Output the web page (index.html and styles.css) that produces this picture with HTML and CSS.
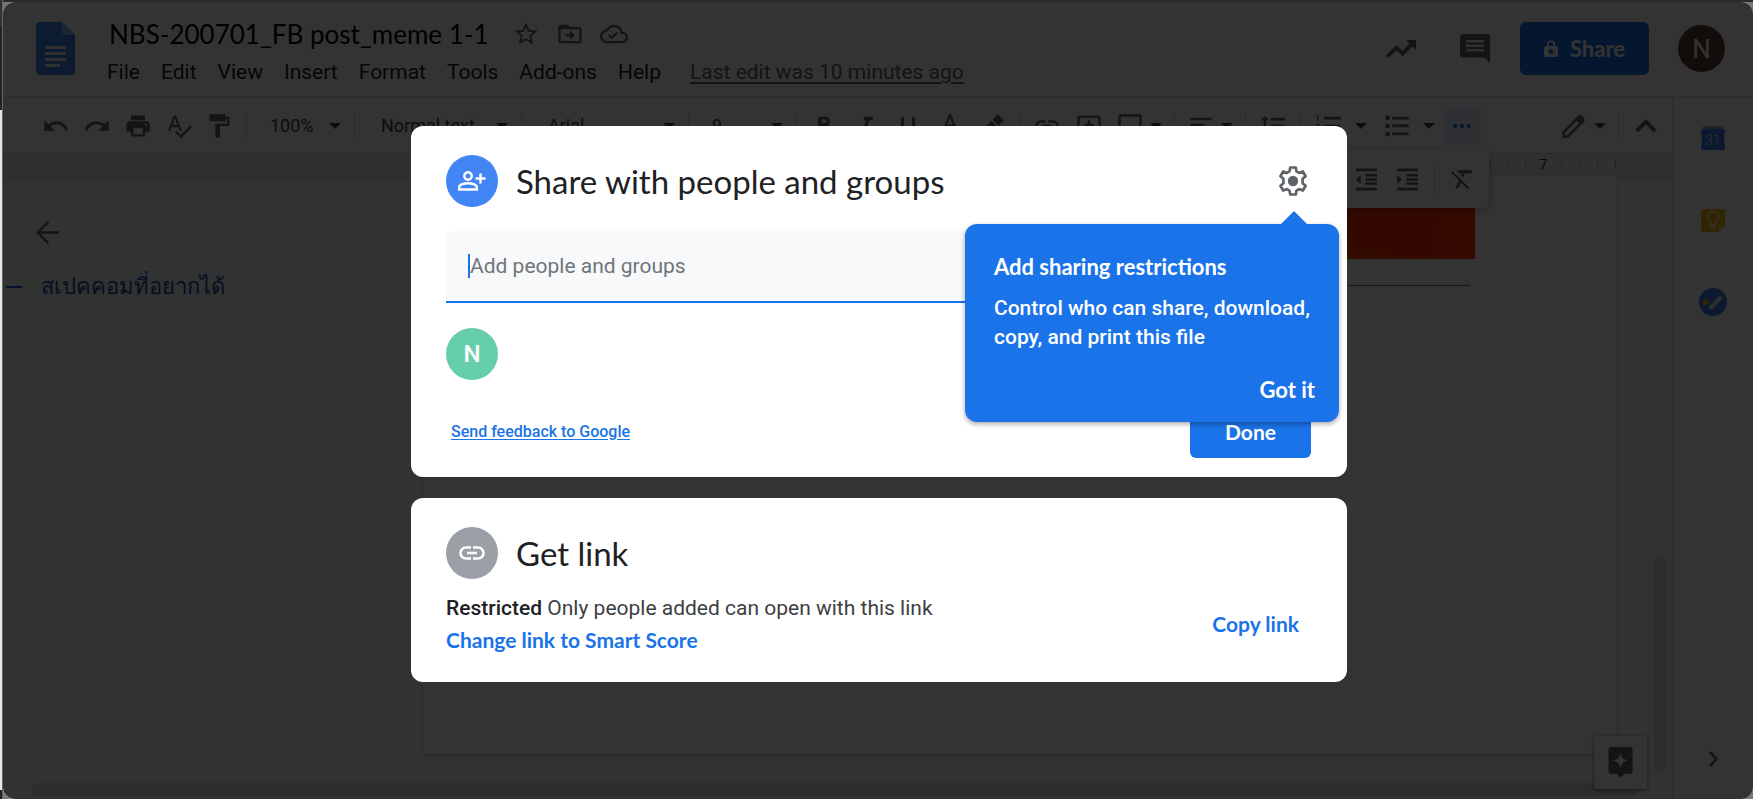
FILE: index.html
```html
<!DOCTYPE html>
<html lang="en">
<head>
<meta charset="utf-8">
<title>NBS-200701_FB post_meme 1-1</title>
<link rel="stylesheet" href="styles.css">
</head>
<body>
<svg class="defs" aria-hidden="true">
  <symbol id="caret" viewBox="0 0 12 6"><path d="M0 0h12L6 6z"/></symbol>
</svg>
<div class="desktop">
  <div class="backdrop"></div>
  <div class="window">
    <div class="app">
      <header class="header">
        <svg class="logo" viewBox="0 0 39 53"><path fill="#4285f4" d="M4 0h22l13 13v36a4 4 0 0 1-4 4H4a4 4 0 0 1-4-4V4a4 4 0 0 1 4-4z"/><path fill="#8ab4f8" d="M26 0l13 13H29a3 3 0 0 1-3-3z"/><path fill="#3367d6" d="M29 13h10v9z" opacity=".5"/><path fill="#f1f1f1" d="M9 24h21v3H9zM9 30h21v3H9zM9 36h21v3H9zM9 42h15v3H9z"/></svg>
        <div class="heading">
          <div class="title-row">
            <h1 class="doc-title">NBS-200701_FB post_meme 1-1</h1>
            <div class="title-icons">
              <button aria-label="Star"><svg viewBox="0 0 24 24"><path d="M22 9.24l-7.19-.62L12 2 9.19 8.63 2 9.24l5.46 4.73L5.82 21 12 17.27 18.18 21l-1.63-7.03L22 9.24zM12 15.4l-3.76 2.27 1-4.28-3.32-2.88 4.38-.38L12 6.1l1.71 4.04 4.38.38-3.32 2.88 1 4.28L12 15.4z"/></svg></button>
              <button aria-label="Move"><svg viewBox="0 0 24 24"><path d="M20 6h-8l-2-2H4c-1.1 0-2 .9-2 2v12c0 1.100.9 2 2 2h16c1.100 0 2-.9 2-2V8c0-1.100-.9-2-2-2zm0 12H4V8h16v10zm-8-1l4-4-4-4v3H8v2h4z"/></svg></button>
              <button aria-label="Document status"><svg viewBox="0 0 24 24"><path d="M19.350 10.040C18.670 6.590 15.640 4 12 4 9.110 4 6.600 5.640 5.350 8.040 2.340 8.360 0 10.910 0 14c0 3.310 2.690 6 6 6h13c2.760 0 5-2.240 5-5 0-2.640-2.050-4.780-4.650-4.960zM19 18H6c-2.210 0-4-1.790-4-4 0-2.050 1.530-3.760 3.560-3.970l1.070-.11.5-.95C8.080 7.140 9.940 6 12 6c2.620 0 4.880 1.860 5.390 4.430l.3 1.500 1.530.11c1.560.1 2.780 1.410 2.780 2.960 0 1.650-1.350 3-3 3zm-9-3.800l-1.900-1.900-1.200 1.200 3.100 3.100 5.300-5.300-1.200-1.200z"/></svg></button>
            </div>
          </div>
          <nav class="menu">
            <button>File</button><button>Edit</button><button>View</button><button>Insert</button><button>Format</button><button>Tools</button><button>Add-ons</button><button>Help</button>
            <a class="last-edit" href="#history">Last edit was 10 minutes ago</a>
          </nav>
        </div>
        <div class="actions">
          <button aria-label="Activity"><svg class="trend" viewBox="0 0 30 18"><path d="M20 0h10v10l-3.600-3.600L16.500 16.200l-6-6L2.500 18 0 15.500 10.500 5l6 6 7-7.400z"/></svg></button>
          <button aria-label="Comments"><svg class="comment" viewBox="0 0 30 29"><path d="M3 0h24a3 3 0 0 1 3 3v26l-6-5.500H3a3 3 0 0 1-3-3V3a3 3 0 0 1 3-3z"/><path fill="#e8eaed" d="M6 6h18v2.500H6zM6 10.500h18V13H6zM6 15h18v2.500H6z"/></svg></button>
          <button class="share"><svg viewBox="0 0 14 17"><path d="M2 6h1V4.500a4 4 0 0 1 8 0V6h1a2 2 0 0 1 2 2v7a2 2 0 0 1-2 2H2a2 2 0 0 1-2-2V8a2 2 0 0 1 2-2zm2.500 0h5V4.500a2.500 2.500 0 0 0-5 0zM7 9a2.500 2.500 0 1 0 0 5 2.500 2.500 0 0 0 0-5z"/></svg>Share</button>
          <button class="account" aria-label="Account">N</button>
        </div>
      </header>

      <div class="body">
        <main class="editor">
          <div class="toolbar">
            <button class="tool" aria-label="Undo"><svg viewBox="0 0 24 24"><path d="M12.500 8c-2.650 0-5.050.99-6.900 2.600L2 7v9h9l-3.620-3.620c1.390-1.160 3.160-1.880 5.120-1.880 3.540 0 6.550 2.310 7.600 5.500l2.370-.78C21.080 11.030 17.150 8 12.500 8z"/></svg></button>
            <button class="tool" aria-label="Redo"><svg viewBox="0 0 24 24"><path d="M18.400 10.600C16.550 8.990 14.150 8 11.500 8c-4.650 0-8.580 3.030-9.960 7.220L3.900 16c1.050-3.190 4.050-5.500 7.600-5.500 1.950 0 3.730.72 5.120 1.880L13 16h9V7l-3.600 3.600z"/></svg></button>
            <button class="tool" aria-label="Print"><svg viewBox="0 0 24 24"><path d="M19 8H5c-1.660 0-3 1.340-3 3v6h4v4h12v-4h4v-6c0-1.660-1.340-3-3-3zm-3 11H8v-5h8v5zm3-7c-.55 0-1-.45-1-1s.45-1 1-1 1 .45 1 1-.45 1-1 1zm-1-9H6v4h12V3z"/></svg></button>
            <button class="tool" aria-label="Spelling"><svg viewBox="0 0 24 24"><path d="M12.450 16h2.090L9.430 3H7.570L2.460 16h2.090l1.120-3h5.640l1.140 3zm-6.020-5L8.500 5.480 10.570 11H6.430zm15.160.59l-8.090 8.090L9.830 16l-1.410 1.410 5.090 5.090L23 13l-1.410-1.410z"/></svg></button>
            <button class="tool" aria-label="Paint format"><svg viewBox="0 0 24 24"><path d="M18 4V3c0-.55-.45-1-1-1H5c-.55 0-1 .45-1 1v4c0 .55.45 1 1 1h12c.55 0 1-.45 1-1V6h1v4H9v11c0 .55.45 1 1 1h2c.55 0 1-.45 1-1v-9h8V4h-3z" transform="translate(-1 0)"/></svg></button>
            <span class="sep"></span>
            <label class="picker short"><select aria-label="Zoom"><option>100%</option></select><svg class="caret"><use href="#caret"/></svg></label>
            <span class="sep"></span>
            <label class="picker long"><select aria-label="Styles"><option>Normal text</option></select><svg class="caret"><use href="#caret"/></svg></label>
            <span class="sep"></span>
            <label class="picker long"><select aria-label="Font"><option>Arial</option></select><svg class="caret"><use href="#caret"/></svg></label>
            <span class="sep"></span>
            <label class="picker short"><select aria-label="Font size"><option>9</option></select><svg class="caret"><use href="#caret"/></svg></label>
            <span class="sep"></span>
            <button class="tool" aria-label="Bold"><svg viewBox="0 0 24 24"><path d="M15.600 10.790c.97-.67 1.650-1.770 1.650-2.790 0-2.260-1.750-4-4-4H7v14h7.040c2.090 0 3.710-1.700 3.710-3.790 0-1.520-.86-2.820-2.150-3.420zM10 6.500h3c.83 0 1.500.67 1.500 1.500s-.67 1.500-1.500 1.500h-3v-3zm3.500 9H10v-3h3.500c.83 0 1.500.67 1.500 1.500s-.67 1.500-1.500 1.500z"/></svg></button>
            <button class="tool" aria-label="Italic"><svg viewBox="0 0 24 24"><path d="M10 4v3h2.210l-3.420 8H6v3h8v-3h-2.210l3.420-8H18V4z"/></svg></button>
            <button class="tool" aria-label="Underline"><svg viewBox="0 0 24 24"><path d="M12 17c3.310 0 6-2.690 6-6V4h-2.500v7c0 1.930-1.570 3.500-3.500 3.500S8.500 12.930 8.500 11V4H6v7c0 3.310 2.690 6 6 6zm-7 2v2h14v-2H5z"/></svg></button>
            <button class="tool" aria-label="Text color"><svg viewBox="0 0 24 24"><path d="M11 2L5.500 16h2.250l1.120-3h6.250l1.120 3h2.250L13 2h-2zm-1.380 9L12 4.670 14.380 11H9.620z"/></svg></button>
            <button class="tool" aria-label="Highlight"><svg viewBox="0 0 24 24"><path d="M17 2l5 5-4.500 4.500-5-5zM11.500 7.500l5 5L11 18H5l-1-3z"/></svg></button>
            <span class="sep"></span>
            <button class="tool" aria-label="Insert link"><svg viewBox="0 0 24 24"><path d="M3.900 12c0-1.710 1.390-3.100 3.100-3.100h4V7H7c-2.760 0-5 2.240-5 5s2.240 5 5 5h4v-1.900H7c-1.710 0-3.100-1.390-3.100-3.100zM8 13h8v-2H8v2zm9-6h-4v1.900h4c1.710 0 3.100 1.390 3.100 3.100s-1.390 3.100-3.100 3.100h-4V17h4c2.760 0 5-2.240 5-5s-2.240-5-5-5z"/></svg></button>
            <button class="tool" aria-label="Add comment"><svg viewBox="0 0 24 24"><path d="M20 3H4a2 2 0 0 0-2 2v12a2 2 0 0 0 2 2h14l4 4V5a2 2 0 0 0-2-2zm0 14H4V5h16zM11 15h2v-3h3v-2h-3V7h-2v3H8v2h3z"/></svg></button>
            <button class="tool split" aria-label="Insert image"><svg viewBox="0 0 24 24"><path d="M20 2H4a2 2 0 0 0-2 2v16a2 2 0 0 0 2 2h16a2 2 0 0 0 2-2V4a2 2 0 0 0-2-2zm0 18H4V4h16z"/></svg><svg class="caret"><use href="#caret"/></svg></button>
            <span class="sep"></span>
            <button class="tool split" aria-label="Align"><svg viewBox="0 0 24 24"><path d="M15 15H3v2h12v-2zm0-5H3v2h12v-2zM3 7h18V5H3v2z"/></svg><svg class="caret"><use href="#caret"/></svg></button>
            <span class="sep"></span>
            <button class="tool" aria-label="Line spacing"><svg viewBox="0 0 24 24"><path d="M6 7h2.500L5 3.500 1.500 7H4v10H1.500L5 20.500 8.500 17H6V7zm4-2v2.300h12V5H10zm0 14h12v-2H10v2zm0-6h12v-2H10v2z"/></svg></button>
            <span class="sep"></span>
            <button class="tool list" aria-label="Numbered list"><svg viewBox="0 0 24 24"><path d="M1 17h2v.5H2v1h1v.5H1v1h3v-4H1v1zm1-9h1V3H1v1h1v4zm-1 3h1.800L1 13.100v.9h3v-1H2.200L4 10.900V10H1v1zm7-7v2.500h14V4H8zm0 15h14v-2H8v2zm0-6h14v-2H8v2z"/></svg><svg class="caret"><use href="#caret"/></svg></button>
            <button class="tool list" aria-label="Bulleted list"><svg viewBox="0 0 24 24"><path d="M4 10a2 2 0 1 0 0 4 2 2 0 0 0 0-4zm0-7a2 2 0 1 0 0 4 2 2 0 0 0 0-4zm0 14a2 2 0 1 0 0 4 2 2 0 0 0 0-4zM8 20h14v-2.500H8V20zm0-7h14v-2.500H8V13zM8 4v2.500h14V4H8z"/></svg><svg class="caret"><use href="#caret"/></svg></button>
            <button class="tool more" aria-label="More"><svg viewBox="0 0 24 24"><circle cx="4" cy="12" r="2.600"/><circle cx="12" cy="12" r="2.600"/><circle cx="20" cy="12" r="2.600"/></svg></button>
            <div class="mode">
              <button class="tool split" aria-label="Editing mode"><svg viewBox="0 0 24 24"><path fill-rule="evenodd" d="M20.700 5.600l-2.300-2.300a2 2 0 0 0-2.800 0L2 16.900V22h5.100L20.700 8.400a2 2 0 0 0 0-2.800zM6.300 20H4v-2.300L14.200 7.500l2.300 2.300z"/></svg><svg class="caret"><use href="#caret"/></svg></button>
              <span class="sep"></span>
              <button class="tool" aria-label="Hide menus"><svg viewBox="0 0 24 24"><path d="M12 6l-9 9 2.400 2.400L12 10.800l6.600 6.600L21 15z"/></svg></button>
            </div>
          </div>
          <div class="overflow">
            <button class="tool" aria-label="Decrease indent"><svg viewBox="0 0 24 24"><path d="M11 17h11v-2.300H11V17zm-9-5l4.500 4.500v-9L2 12zm0 10.500h20V20H2v2.500zM2 1.500V4h20V1.500H2zM11 9h11V6.700H11V9zm0 4.200h11v-2.400H11v2.400z"/></svg></button>
            <button class="tool" aria-label="Increase indent"><svg viewBox="0 0 24 24"><path d="M2 22.500h20V20H2v2.500zM2 7.500v9L6.500 12 2 7.500zM11 17h11v-2.300H11V17zM2 1.500V4h20V1.500H2zM11 9h11V6.700H11V9zm0 4.200h11v-2.400H11v2.400z"/></svg></button>
            <span class="sep"></span>
            <button class="tool" aria-label="Clear formatting"><svg viewBox="0 0 24 24"><path d="M3.270 4L2 5.270l7.500 7.500L6 20.500h3.300l2.300-5.600L18.200 21.500l1.500-1.300L3.600 4.300zM7 3v.2L9.800 6h2.500l-.8 2 2.100 2.100L15.400 6H22V3H7z"/></svg></button>
          </div>
          <div class="ruler"><i></i><i></i><i></i><b>7</b><i></i><i></i><i></i><i class="end"></i></div>
          <div class="workspace">
            <aside class="outline">
              <button aria-label="Close outline"><svg viewBox="0 0 24 24"><path d="M23.500 10.700H4.800l9-9L12 0 0 12l12 12 1.700-1.700-9-9h18.800z"/></svg></button>
              <a href="#section" lang="th">สเปคคอมที่อยากได้</a>
            </aside>
            <article class="page"><div class="picture"><svg viewBox="0 0 60 52"><path d="M20 52l21-21" stroke="#ff5a3c" stroke-width="1.500"/></svg></div><hr></article>
            <button class="explore" aria-label="Explore"><svg viewBox="0 0 27 36"><path fill-rule="evenodd" d="M3 0h21a3 3 0 0 1 3 3v24a3 3 0 0 1-3 3h-6l-4.500 5L9 30H3a3 3 0 0 1-3-3V3a3 3 0 0 1 3-3zm10.500 5.500c-1 6-2.500 8-8.500 9.500 6 1.500 7.500 3.500 8.500 9.500 1-6 2.500-8 8.500-9.500-6-1.500-7.500-3.500-8.500-9.500z"/></svg></button>
            <div class="scroll-y"></div>
            <div class="scroll-x"></div>
          </div>
        </main>
        <aside class="side">
          <button aria-label="Calendar"><svg viewBox="0 0 28 28"><path fill="#a0a4aa" d="M4 2h20v4H4z"/><path fill="#3c78e8" d="M4 5h20a2 2 0 0 1 2 2l-1 6 1 11a2 2 0 0 1-2 2H4a2 2 0 0 1-2-2l1-11-1-6a2 2 0 0 1 2-2z"/><text x="14" y="21" text-anchor="middle" fill="#b8c8e8" font-size="14">31</text></svg></button>
          <button aria-label="Keep"><svg viewBox="0 0 28 28"><path fill="#f4b400" d="M4 3h20a2 2 0 0 1 2 2v15l-6 6H4a2 2 0 0 1-2-2V5a2 2 0 0 1 2-2z"/><path fill="#f9d67a" d="M20 20h6l-6 6z"/><path fill="none" stroke="#fff2c8" stroke-width="1.500" d="M11.500 19v-3a5.500 5.500 0 1 1 5 0v3zm0 3h5"/></svg></button>
          <button aria-label="Tasks"><svg viewBox="0 0 28 28"><circle cx="14" cy="14" r="14" fill="#3f7de8"/><circle cx="7" cy="14.500" r="3" fill="#f4b400"/><path stroke="#dfe6f2" stroke-width="4" stroke-linecap="round" d="M12 19.500L21 10"/></svg></button>
          <button class="expand" aria-label="Hide side panel"><svg viewBox="0 0 9 16"><path d="M2 0L0 2l5.500 6L0 14l2 2 7-8z"/></svg></button>
        </aside>
      </div>
    </div>

    <div class="scrim">
      <section class="card" role="dialog" aria-label="Share with people and groups">
        <div class="card-head">
          <span class="badge blue"><svg viewBox="0 0 28 20" fill="none" stroke="#fff" stroke-width="2.400"><circle cx="10" cy="5" r="3.700"/><path d="M1.200 18.500v-2c0-3 5.500-4.300 8.800-4.300s8.800 1.300 8.800 4.300v2zM22.500 2.500v10M17.500 7.500h10"/></svg></span>
          <h2>Share with people and groups</h2>
          <button class="gear" aria-label="Settings"><svg viewBox="0 0 30 30"><path fill="none" stroke="#5f6368" stroke-width="2.700" stroke-linejoin="round" d="M12.200 1.500h5.600l.7 3.900 2.600 1.500 3.700-1.400 2.800 4.800-3 2.500v4.400l3 2.500-2.800 4.800-3.700-1.400-2.600 1.500-.7 3.900h-5.600l-.7-3.900-2.600-1.500-3.700 1.400-2.800-4.800 3-2.500v-4.400l-3-2.500 2.800-4.800 3.700 1.400 2.600-1.500z"/><circle cx="15" cy="15" r="5.200" fill="#5f6368"/></svg></button>
        </div>
        <div class="field"><input type="text" aria-label="Add people and groups" placeholder="Add people and groups"></div>
        <span class="badge green">N</span>
        <div class="card-foot">
          <a href="#feedback">Send feedback to Google</a>
          <button class="done">Done</button>
        </div>
        <div class="tip" role="tooltip">
          <h3>Add sharing restrictions</h3>
          <p>Control who can share, download, copy, and print this file</p>
          <button>Got it</button>
        </div>
      </section>
      <section class="card link-card">
        <div class="card-head">
          <span class="badge grey"><svg viewBox="0 0 26 14"><path fill="none" stroke="#fff" stroke-width="2.600" d="M12 1.500H7a5.500 5.500 0 0 0 0 11h5M14 1.500h5a5.500 5.500 0 0 1 0 11h-5M8 7h10"/></svg></span>
          <h2>Get link</h2>
        </div>
        <div class="link-row">
          <div><p><strong>Restricted</strong> Only people added can open with this link</p><a href="#change">Change link to Smart Score</a></div>
          <button>Copy link</button>
        </div>
      </section>
    </div>
  </div>
</div>
</body>
</html>
```

FILE: styles.css
```css
* { box-sizing: border-box; }
body { margin: 0; font: 21px/28px Roboto, "Noto Sans", sans-serif; color: #202124; background: #2a2a2a; }
button { border: 0; padding: 0; background: none; color: inherit; font: inherit; cursor: pointer; }
h1, h2, h3, p { margin: 0; font-weight: 400; }
svg { display: block; flex: none; fill: #5f6368; }
.defs { position: absolute; width: 0; height: 0; }

.desktop { display: flex; height: 100vh; }
.backdrop { width: 3px; background: linear-gradient(#333 26px, #1c2529 26px 110px, #e6e6e6 110px 790px, #1c2529 790px); border-right: 1px solid #666; }
.window { position: relative; flex: 1; min-width: 0; margin-top: 2px; background: #777; }
.app { display: flex; flex-direction: column; height: 100%; background: #fff; border-radius: 12px; overflow: hidden; }

.header { display: flex; align-items: flex-start; height: 95px; padding: 20px 28px 0 33px; border-bottom: 1px solid #dadce0; }
.logo { width: 39px; height: 53px; }
.heading { flex: 1; padding-left: 34px; margin-top: -8px; }
.title-row { display: flex; align-items: center; height: 40px; }
.doc-title { font: 26px/40px Lato, sans-serif; color: #000; white-space: nowrap; }
.title-icons { display: flex; gap: 16px; margin-left: 23px; }
.title-icons svg { width: 28px; height: 28px; }
.menu { display: flex; gap: 21px; margin-left: -2px; line-height: 36px; white-space: nowrap; }
.last-edit { margin-left: 8px; color: #5f6368; text-underline-offset: 3px; }
.actions { display: flex; align-items: center; height: 53px; }
.trend { width: 30px; height: 18px; margin-right: 44px; }
.comment { width: 30px; height: 29px; margin-right: 30px; }
.share { display: flex; align-items: center; justify-content: center; gap: 12px; width: 129px; height: 53px; border-radius: 6px; background: #1a73e8; color: #fff; font: 700 22px Lato, sans-serif; }
.share svg { width: 14px; height: 17px; fill: #fff; }
.account { width: 47px; height: 47px; margin-left: 29px; border-radius: 50%; background: #5d4037; color: #fff; font-size: 26px; }

.body { display: flex; flex: 1; min-height: 0; }
.editor { position: relative; display: flex; flex-direction: column; flex: 1; min-width: 0; }
.toolbar { display: flex; align-items: center; height: 57px; padding: 2px 6px 0 32px; border-bottom: 1px solid #dadce0; }
.tool { display: flex; flex: none; align-items: center; justify-content: center; width: 41px; height: 38px; }
.tool svg { width: 28px; height: 28px; }
.picker ~ .tool { width: 42px; }
.sep { flex: none; width: 1px; height: 29px; margin: 0 6px; background: #dadce0; }
.caret, .tool .caret { width: 12px; height: 6px; fill: #444; }
.picker { display: flex; flex: none; align-items: center; padding: 0 7px 0 17px; }
.picker.short { width: 95px; }
.picker.long { width: 154px; padding-left: 20px; }
.picker select { flex: 1; min-width: 0; border: 0; padding: 0; background: none; color: #3c4043; appearance: none; font: 18px/28px Roboto, sans-serif; }
.tool.split { gap: 6px; width: 58px; }
.tool.list { gap: 12px; width: 68px; }
.tool.more { width: 38px; border-radius: 3px; background: #e8f0fe; }
.tool.more svg { width: 20px; height: 20px; fill: #1a73e8; }
.mode { display: flex; align-items: center; margin-left: auto; }
.overflow { position: absolute; z-index: 1; top: 53px; right: 183px; display: flex; align-items: center; width: 180px; height: 58px; padding-left: 37px; border-radius: 6px; background: #fff; box-shadow: 0 2px 8px rgba(0,0,0,.3); }
.overflow .tool svg { width: 25px; height: 25px; }
.ruler { display: flex; align-items: center; justify-content: flex-end; height: 21px; padding-right: 56px; background: #eef1f0; color: #333; font-size: 15px; }
.ruler i { width: 1px; height: 5px; margin-left: 17px; background: #aaa; }
.ruler b { width: 9px; margin: 0 -4px 0 13px; font-weight: 400; }
.ruler .end { height: 10px; }

.workspace { position: relative; display: flex; flex: 1; min-height: 0; padding: 0 55px 45px 0; background: #f6f9f7; box-shadow: inset 0 5px 6px -3px rgba(0,0,0,.15); }
.outline { flex: none; width: 420px; padding: 46px 0 0 33px; }
.outline svg { width: 23px; height: 23px; }
.outline a { display: flex; align-items: center; margin: 18px 0 0 -30px; line-height: 36px; color: #174ea6; text-decoration: none; font-size: 22px; white-space: nowrap; }
.outline a::before { content: ""; width: 16px; height: 2px; margin-right: 19px; background: #1a56c4; }
.page { flex: 1; padding: 32px 142px 0 110px; background: #fff; box-shadow: 0 1px 4px rgba(60,64,67,.3); }
.picture { display: flex; justify-content: flex-end; height: 52px; background: radial-gradient(ellipse 62px 16px at 818px 52px, #ff3c00 60%, transparent 75%), linear-gradient(90deg, #f01a00, #ff2d00); }
.picture svg { width: 60px; height: 52px; }
.page hr { margin: 26px 5px 0 0; border: 0; border-top: 1px solid #777; }
.explore { position: absolute; right: 25px; bottom: 10px; z-index: 1; display: grid; place-items: center; width: 53px; height: 53px; border-radius: 3px; background: #fff; box-shadow: 0 1px 4px rgba(0,0,0,.5); }
.explore svg { width: 27px; height: 32px; }
.scroll-y { position: absolute; right: 5px; bottom: 26px; width: 13px; height: 218px; border-radius: 7px; background: #dadce0; }
.scroll-x { position: absolute; right: 34px; bottom: 3px; left: 28px; height: 13px; border-radius: 7px; background: #dadce0; }

.side { display: flex; flex: none; flex-direction: column; align-items: center; gap: 54px; width: 81px; padding: 27px 0 32px; border-left: 1px solid #dadce0; }
.side svg { width: 28px; height: 28px; }
.side .expand { margin-top: auto; }
.side .expand svg { width: 9px; height: 16px; }

.scrim { position: absolute; inset: 0; z-index: 2; display: flex; flex-direction: column; align-items: center; gap: 21px; padding: 124px 0 0 2px; border-radius: 12px; background: rgba(0,0,0,.8); }
.card { position: relative; width: 936px; max-width: 100%; padding: 29px 35px 19px; border-radius: 12px; background: #fff; }
.card-head { display: flex; align-items: center; gap: 18px; }
.card h2 { flex: 1; font: 33px/52px Lato, sans-serif; }
.badge { display: grid; place-items: center; width: 52px; height: 52px; border-radius: 50%; color: #fff; font-size: 24px; font-weight: 500; }
.blue { background: #4285f4; }
.blue svg { width: 28px; height: 20px; fill: none; }
.green { margin-top: 25px; background: #66ceaa; }
.grey { background: #9aa0a6; }
.grey svg { width: 26px; height: 14px; }
.gear { margin-right: 4px; }
.gear svg { width: 30px; height: 30px; }
.field { display: flex; align-items: center; height: 72px; margin-top: 24px; padding-left: 22px; border-bottom: 2px solid #1a73e8; border-radius: 8px 8px 0 0; background: #f8f9fb; }
.field input { flex: 1; height: 24px; padding: 0; border: 0; border-left: 2px solid #1a73e8; background: none; outline: 0; font: 21px/24px Roboto, sans-serif; }
.field input::placeholder { color: #70757a; opacity: 1; }
.card-foot { display: flex; align-items: center; justify-content: space-between; margin-top: 25px; padding: 0 1px 0 5px; }
.card-foot a { color: #1a73e8; font-size: 16px; font-weight: 500; text-underline-offset: 2px; }
.done { width: 121px; height: 53px; border-radius: 6px; background: #1a73e8; color: #fff; font: 700 21px Lato, sans-serif; }
.tip { position: absolute; top: 98px; right: 8px; width: 374px; padding: 28px 24px 17px 29px; border-radius: 12px; background: #1a73e8; color: #fff; box-shadow: 0 2px 5px rgba(0,0,0,.35); }
.tip::before { content: ""; position: absolute; top: -13px; right: 32px; border: 13px solid transparent; border-top: 0; border-bottom-color: #1a73e8; }
.tip h3 { font: 700 22px/30px Lato, sans-serif; }
.tip p { margin-top: 12px; line-height: 29px; font-weight: 500; }
.tip button { display: block; margin: 23px 0 0 auto; font: 700 22px/30px Lato, sans-serif; }

.link-card { padding-bottom: 26px; }
.link-row { display: flex; align-items: center; justify-content: space-between; margin-top: 13px; padding-right: 13px; }
.link-row p { line-height: 32px; color: #3c4043; }
.link-row strong { font-weight: 500; color: #202124; }
.link-row a, .link-row button { color: #1a73e8; font: 700 21px/32px Lato, sans-serif; text-decoration: none; }
```
